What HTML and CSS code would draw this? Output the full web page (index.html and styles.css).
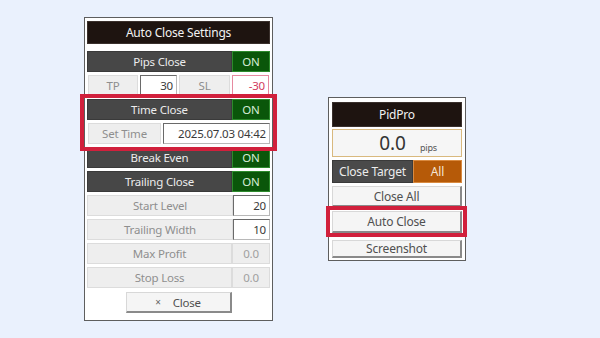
FILE: index.html
```html
<!DOCTYPE html>
<html>
<head>
<meta charset="utf-8">
<link rel="stylesheet" href="styles.css">
</head>
<body>
<div class="stage">
  <div class="panel settings">
    <div class="title">Auto Close Settings</div>
    <div class="rows">
      <div class="row"><div class="cell dark grow">Pips Close</div><div class="cell on">ON</div></div>
      <div class="row split">
        <div class="cell light tp">TP</div><div class="cell box">30</div>
        <div class="cell light sl">SL</div><div class="cell box neg">-30</div>
      </div>
      <div class="hl-group">
        <div class="row"><div class="cell dark grow">Time Close</div><div class="cell on">ON</div></div>
        <div class="row split"><div class="cell light settime">Set Time</div><div class="cell box grow">2025.07.03 04:42</div></div>
      </div>
      <div class="row"><div class="cell dark grow">Break Even</div><div class="cell on">ON</div></div>
      <div class="row"><div class="cell dark grow">Trailing Close</div><div class="cell on">ON</div></div>
      <div class="row"><div class="cell light grow">Start Level</div><div class="cell box">20</div></div>
      <div class="row"><div class="cell light grow">Trailing Width</div><div class="cell box">10</div></div>
      <div class="row"><div class="cell light grow">Max Profit</div><div class="cell light val">0.0</div></div>
      <div class="row"><div class="cell light grow">Stop Loss</div><div class="cell light val">0.0</div></div>
      <div class="footer"><div class="btn close-btn"><span class="x">×</span>Close</div></div>
    </div>
  </div>

  <div class="panel pid">
    <div class="title tall">PidPro</div>
    <div class="pips"><span class="num">0.0</span><span class="unit">pips</span></div>
    <div class="row target"><div class="cell dark tgt">Close Target</div><div class="cell all">All</div></div>
    <div class="btn pbtn">Close All</div>
    <div class="btn pbtn hl">Auto Close</div>
    <div class="btn pbtn last">Screenshot</div>
  </div>
</div>
</body>
</html>
```

FILE: styles.css
```css
* { box-sizing: border-box; }
html, body { margin: 0; padding: 0; }
body {
  background: #eaf1fd;
  width: 600px;
  height: 338px;
  overflow: hidden;
  font-family: "Noto Sans", "Open Sans", sans-serif;
  font-size: 11.5px;
  letter-spacing: -0.2px;
}
.stage {
  display: flex;
  align-items: flex-start;
  padding: 17px 0 0 84px;
  gap: 55px;
}
.panel {
  background: #ffffff;
  border: 1px solid #5e5e5e;
  padding: 3px 2px 4px 2px;
  display: flex;
  flex-direction: column;
}
.settings { width: 189px; height: 304px; }
.title {
  background: #1e1410;
  color: #f2f2f2;
  height: 23px;
  display: flex;
  align-items: center;
  justify-content: center;
  border: 1px solid #3a302c;
  font-size: 12px;
}
.rows {
  display: flex;
  flex-direction: column;
  gap: 3px;
  margin-top: 7px;
}
.row {
  display: flex;
  height: 21px;
}
.row.split { gap: 2px; padding-left: 1px; }
.cell {
  display: flex;
  align-items: center;
  justify-content: center;
  height: 100%;
}
.grow { flex: 1; }
.dark {
  background: #474747;
  color: #ececec;
  border: 1px solid #3a3a3a;
}
.on {
  width: 38px;
  background: #0a560a;
  color: #d6ecd6;
  border: 1px solid #2d8a2d;
}
.light {
  background: #eeeeee;
  color: #8e8e8e;
  border: 1px solid #dcdcdc;
}
.box {
  width: 37px;
  background: #ffffff;
  color: #3a3a3a;
  border: 1px solid #6a6a6a;
  border-right-color: #b8b8b8;
  border-bottom-color: #b8b8b8;
  justify-content: flex-end;
  padding-right: 3px;
}
.box.neg {
  color: #d23a5e;
  border: 1px solid #e68aa0;
}
.tp { width: 50px; }
.sl { width: 51px; }
.settime { width: 73px; }
.val { width: 38px; color: #a0a0a0; }
.hl-group {
  display: flex;
  flex-direction: column;
  gap: 3px;
  position: relative;
}
.hl-group::after, .pbtn.hl::after {
  content: "";
  position: absolute;
  border: 4px solid #d1203c;
  pointer-events: none;
}
.hl-group::after { top: -5px; bottom: -7px; left: -7px; right: -7px; }
.footer {
  display: flex;
  justify-content: center;
  margin-top: 1px;
}
.btn {
  display: flex;
  align-items: center;
  justify-content: center;
  background: #f5f5f5;
  color: #505050;
  border: 1px solid #d8d8d8;
  border-right: 2px solid #8a8a8a;
  border-bottom: 2px solid #8a8a8a;
}
.close-btn { width: 106px; height: 21px; }
.x { font-size: 10px; margin-right: 12px; color: #666; }

.pid { width: 138px; margin-top: 80px; padding: 4px 3px 2px 3px; }
.title.tall { height: 25px; }
.pips {
  margin-top: 2px;
  height: 28px;
  background: #f6f6f6;
  border: 1px solid #d9b97e;
  display: flex;
  align-items: center;
  justify-content: center;
  padding-left: 22px;
  color: #333;
}
.num { font-size: 19px; letter-spacing: 0; }
.unit { font-size: 9px; margin-left: 14px; margin-top: 8px; color: #555; }
.row.target { height: 23px; margin-top: 3px; }
.tgt { width: 81px; font-size: 12px; background: #4a4a4a; }
.all {
  flex: 1;
  background: #b65a08;
  color: #f4e4d4;
  border: 1px solid #d98a40;
  font-size: 12px;
}
.pbtn { height: 21px; margin-top: 3px; position: relative; font-size: 12px; }
.pbtn:nth-of-type(1) { margin-top: 2px; }
.pbtn.hl { margin-top: 4px; height: 22px; }
.pbtn.hl::after { top: -6px; bottom: -6px; left: -7px; right: -7px; }
.pbtn.last { margin-top: 7px; height: 18px; }
```
